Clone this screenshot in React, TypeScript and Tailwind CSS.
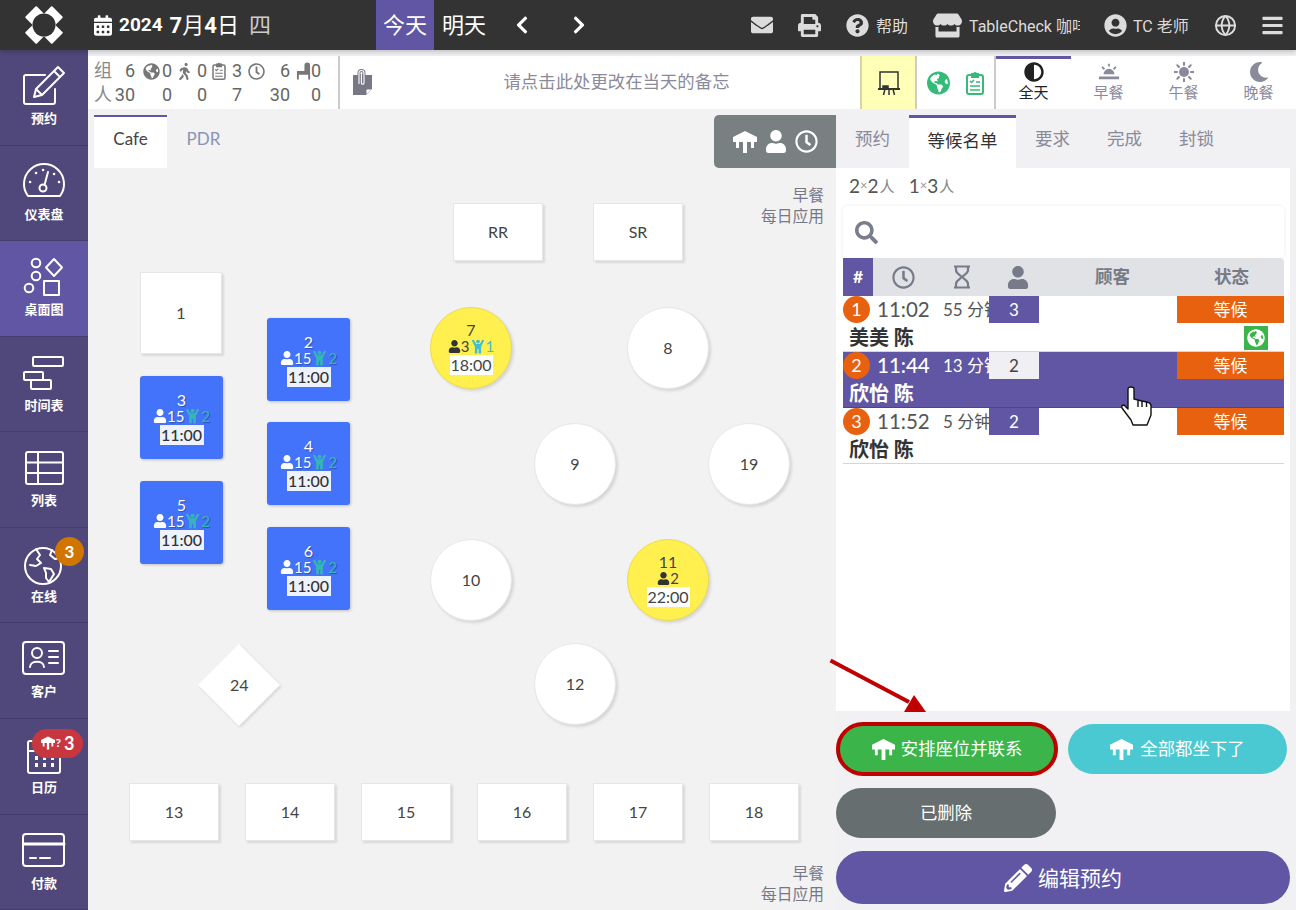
import type { ReactNode } from "react";
import {
  FaAdjust,
  FaBars,
  FaCalendarAlt,
  FaChevronLeft,
  FaChevronRight,
  FaEnvelope,
  FaGlobeAmericas,
  FaMoon,
  FaPencilAlt,
  FaPrint,
  FaQuestionCircle,
  FaRegClock,
  FaSearch,
  FaStore,
  FaUser,
  FaUserCircle,
  FaWalking,
} from "react-icons/fa";
import { FiGlobe } from "react-icons/fi";

const FONT = "font-['Lato','Noto_Sans_CJK_SC',sans-serif]";

function TableIcon({ className }: { className?: string }) {
  return (
    <svg viewBox="0 0 24 24" fill="currentColor" className={className}>
      <path d="M12 1 L24 7 V12 H21 V18 H18 V12 H14 V23 H10 V12 H6 V18 H3 V12 H0 V7 Z" />
    </svg>
  );
}

function ChildIcon({ className }: { className?: string }) {
  return (
    <svg viewBox="0 0 24 24" fill="currentColor" className={className}>
      <circle cx="12" cy="4" r="3" />
      <path d="M2 2 L5 1 L9 8 H15 L19 1 L22 2 L17 12 V23 H13 V16 H11 V23 H7 V12 Z" />
    </svg>
  );
}

function ChairIcon({ className }: { className?: string }) {
  return (
    <svg viewBox="0 0 16 18" fill="currentColor" className={className}>
      <path d="M9 3 a3 3 0 0 1 6 0 V18 H13 V13 H3 V18 H1 V9 H9 Z" />
    </svg>
  );
}

function ClipboardIcon({ className }: { className?: string }) {
  return (
    <svg viewBox="0 0 18 24" fill="none" stroke="currentColor" strokeWidth="2" className={className}>
      <rect x="1" y="4" width="16" height="19" rx="2" />
      <path d="M6 4 V3 H8 a1 1 0 0 1 2 0 H12 V6 H6 Z" fill="currentColor" />
      <path d="M4 10 L5.5 11.5 L8 9 M10 11 H14 M4 15 H14 M4 19 H14" strokeWidth="1.5" />
    </svg>
  );
}

function SideIcon({ children }: { children: ReactNode }) {
  return (
    <svg viewBox="0 0 44 44" fill="none" stroke="white" strokeWidth="2" strokeLinejoin="round" strokeLinecap="round" className="w-[44px] h-[44px]">
      {children}
    </svg>
  );
}

const NAV: { label: string; active?: boolean; icon: ReactNode; badge?: ReactNode }[] = [
  {
    label: "预约",
    icon: (
      <SideIcon>
        <path d="M33 25 V38 a2 2 0 0 1 -2 2 H4 a2 2 0 0 1 -2 -2 V13 a2 2 0 0 1 2 -2 H23" />
        <path d="M36 3 L42 9 L20 31 L12 33 L14 25 Z M32 7 L38 13 M14 25 L20 31" />
      </SideIcon>
    ),
  },
  {
    label: "仪表盘",
    icon: (
      <SideIcon>
        <path d="M6 36 A20 20 0 1 1 38 36 Z" />
        <circle cx="21" cy="28" r="3.5" />
        <path d="M22.5 25 L26 12" />
        <path d="M8 22 h.1 M14 13 h.1 M21 10 h.1 M32 14 h.1 M37 22 h.1" strokeWidth="2.5" />
      </SideIcon>
    ),
  },
  {
    label: "桌面图",
    active: true,
    icon: (
      <SideIcon>
        <circle cx="14" cy="8" r="4.3" />
        <circle cx="14" cy="21" r="4.3" />
        <circle cx="7" cy="33" r="4.3" />
        <path d="M32 4 L40 12.5 L32 21 L24 12.5 Z" />
        <rect x="22" y="26" width="15" height="14" />
      </SideIcon>
    ),
  },
  {
    label: "时间表",
    icon: (
      <SideIcon>
        <rect x="11" y="6" width="30" height="9" rx="1" />
        <rect x="2" y="21" width="19" height="8" rx="1" />
        <rect x="9" y="29" width="20" height="9" rx="1" />
      </SideIcon>
    ),
  },
  {
    label: "列表",
    icon: (
      <SideIcon>
        <rect x="4" y="6" width="37" height="32" rx="2" />
        <path d="M4 16.5 H41 M4 27 H41 M16 6 V38" />
      </SideIcon>
    ),
  },
  {
    label: "在线",
    badge: <span className="absolute left-[55px] top-[9px] w-[29px] h-[29px] rounded-full bg-[#cf7500] text-white text-[17px] font-bold flex items-center justify-center">3</span>,
    icon: (
      <SideIcon>
        <circle cx="21" cy="24" r="18" />
        <path d="M14 7 L18 13 L15 17 L19 21 L14 24 L8 23 M22 26 L29 27 L32 32 L27 40 L24 36 L24 31 Z M30 8 L28 13 L33 17 L38 16" />
      </SideIcon>
    ),
  },
  {
    label: "客户",
    icon: (
      <SideIcon>
        <rect x="1" y="5" width="41" height="32" rx="3" />
        <circle cx="15" cy="16" r="5" />
        <path d="M8 30 c0 -7 14 -7 14 0 M27 14 H36 M27 20 H36 M27 26 H36" />
      </SideIcon>
    ),
  },
  {
    label: "日历",
    badge: (
      <span className="absolute left-[32px] top-[10px] h-[29px] w-[51px] rounded-full bg-[#c8363f] text-white flex items-center justify-center gap-[2px] font-bold">
        <TableIcon className="w-[14px] h-[14px]" />
        <span className="text-[12px] -ml-[1px]">?</span>
        <span className="text-[18px] leading-none ml-[1px]">3</span>
      </span>
    ),
    icon: (
      <SideIcon>
        <rect x="6" y="8" width="32" height="32" rx="2" />
        <path d="M6 18 H38" />
        <path d="M13 25 h3 M21 25 h3 M29 25 h3 M13 32 h3 M21 32 h3 M29 32 h3" strokeWidth="4" strokeLinecap="butt" />
      </SideIcon>
    ),
  },
  {
    label: "付款",
    icon: (
      <SideIcon>
        <rect x="1" y="5" width="41" height="32" rx="3" />
        <path d="M1 15 H42" strokeWidth="3" />
        <path d="M8 29 H14 M18 29 H28" />
      </SideIcon>
    ),
  },
];

type Table = {
  n: string;
  x: number;
  y: number;
  w: number;
  h: number;
  shape?: "round" | "diamond";
  blue?: boolean;
  yellow?: { p: string; c?: string; t: string };
};

const blue = (n: string, x: number, y: number): Table => ({ n, x, y, w: 83, h: 83, blue: true });
const plain = (n: string, x: number, y: number, w = 90, h = 58): Table => ({ n, x, y, w, h });
const round = (n: string, x: number, y: number): Table => ({ n, x, y, w: 82, h: 82, shape: "round" });

const TABLES: Table[] = [
  plain("RR", 365, 94),
  plain("SR", 505, 94),
  plain("1", 52, 163, 82, 82),
  blue("3", 52, 267),
  blue("5", 52, 372),
  blue("2", 179, 209),
  blue("4", 179, 313),
  blue("6", 179, 418),
  { ...round("7", 342, 198), yellow: { p: "3", c: "1", t: "18:00" } },
  round("8", 539, 198),
  round("9", 446, 314),
  round("19", 620, 314),
  round("10", 342, 430),
  { ...round("11", 539, 430), yellow: { p: "2", t: "22:00" } },
  round("12", 446, 534),
  { n: "24", x: 122, y: 547, w: 58, h: 58, shape: "diamond" },
  plain("13", 41, 674),
  plain("14", 157, 674),
  plain("15", 273, 674),
  plain("16", 389, 674),
  plain("17", 505, 674),
  plain("18", 621, 674),
];

function TableNode({ t }: { t: Table }) {
  const pos = { left: t.x, top: t.y, width: t.w, height: t.h };
  if (t.blue) {
    return (
      <div style={pos} className="absolute rounded-[3px] bg-[#4373fb] shadow-[1px_1px_3px_rgba(0,0,0,0.2)] flex flex-col items-center justify-center text-white [text-shadow:1px_1px_1px_rgba(0,0,0,0.3)]">
        <div className="text-[16px] leading-[17px]">{t.n}</div>
        <div className="flex items-center text-[15px] leading-[16px]">
          <FaUser className="w-[14px] h-[14px]" />
          <span>15</span>
          <ChildIcon className="w-[17px] h-[16px] text-[#35b6b5]" />
          <span className="text-[#35b6b5]">2</span>
        </div>
        <div className="mt-[1px] w-[44px] h-[20px] bg-[#eef2fd] text-[#333] text-[16px] font-medium leading-[20px] text-center [text-shadow:none]">11:00</div>
      </div>
    );
  }
  if (t.yellow) {
    return (
      <div style={pos} className="absolute rounded-full bg-[#fff050] border border-[#eadc50] shadow-[2px_2px_3px_rgba(0,0,0,0.12)] flex flex-col items-center justify-center text-[#444]">
        <div className="text-[16px] leading-[17px]">{t.n}</div>
        <div className="flex items-center text-[15px] leading-[17px]">
          <FaUser className="w-[13px] h-[13px] text-[#333]" />
          <span>{t.yellow.p}</span>
          {t.yellow.c && (
            <>
              <ChildIcon className="w-[16px] h-[15px] text-[#44bdd0]" />
              <span className="text-[#44bdd0]">{t.yellow.c}</span>
            </>
          )}
        </div>
        <div className="w-[43px] h-[20px] bg-white text-[16px] leading-[20px] text-center">{t.yellow.t}</div>
      </div>
    );
  }
  if (t.shape === "diamond") {
    return (
      <div style={pos} className="absolute rotate-45 bg-white shadow-[2px_0_3px_rgba(0,0,0,0.12)] flex items-center justify-center">
        <span className="-rotate-45 text-[16px] text-[#444]">{t.n}</span>
      </div>
    );
  }
  return (
    <div style={pos} className={`absolute bg-white flex items-center justify-center text-[16px] text-[#444] ${t.shape === "round" ? "rounded-full border border-[#e8e8e8] shadow-[2px_2px_3px_rgba(0,0,0,0.12)]" : "border border-[#e6e6e6] shadow-[2px_2px_2px_rgba(0,0,0,0.1)]"}`}>
      {t.n}
    </div>
  );
}

const ROWS = [
  { i: "1", time: "11:02", wait: "55 分钟", n: "3", name: "美美 陈", web: true },
  { i: "2", time: "11:44", wait: "13 分钟", n: "2", name: "欣怡 陈", on: true },
  { i: "3", time: "11:52", wait: "5 分钟", n: "2", name: "欣怡 陈" },
];

function Row({ r }: { r: (typeof ROWS)[number] }) {
  return (
    <div className={`relative h-[56px] border-b ${r.on ? "bg-[#6056a3] border-[#4c4490] text-white" : "bg-white border-[#d6d6d6] text-[#333]"}`}>
      <div className="flex h-[27px] items-stretch">
        <span className="w-[27px] h-[27px] rounded-full bg-[#e8610f] text-white text-[18px] flex items-center justify-center shrink-0">{r.i}</span>
        <span className={`ml-[7px] w-[55px] shrink-0 text-[20.5px] leading-[27px] ${r.on ? "font-medium" : "text-[#555]"}`}>{r.time}</span>
        <span className={`ml-[11px] w-[46px] shrink-0 whitespace-nowrap text-[17px] leading-[27px] ${r.on ? "" : "text-[#555]"}`}>{r.wait}</span>
        <span className={`relative w-[50px] shrink-0 text-[17px] flex items-center justify-center ${r.on ? "bg-[#efeff4] text-[#444]" : "bg-[#6056a3] text-white"}`}>{r.n}</span>
        <span className="ml-[138px] w-[107px] bg-[#e8610f] text-white text-[17px] flex items-center justify-center">等候</span>
      </div>
      <div className="pl-[6px] text-[20px] leading-[28px] font-bold">{r.name}</div>
      {r.web && (
        <span className="absolute left-[401px] top-[30px] w-[24px] h-[24px] bg-[#3bb54a] flex items-center justify-center">
          <FaGlobeAmericas className="w-[18px] h-[18px] text-white" />
        </span>
      )}
    </div>
  );
}

function ScopeNote({ className }: { className: string }) {
  return (
    <div className={`absolute right-[12px] text-right text-[15.75px] leading-[21px] text-[#77778a] ${className}`}>
      <div>早餐</div>
      <div>每日应用</div>
    </div>
  );
}

export default function App() {
  return (
    <div className={`relative w-[1296px] h-[910px] overflow-hidden flex flex-col bg-[#f1f1f4] ${FONT}`}>
      {/* top bar */}
      <header className="relative z-10 h-[50px] shrink-0 bg-[#333] flex items-stretch text-white shadow-[0_2px_5px_rgba(0,0,0,0.2)] font-['Roboto','Noto_Sans_CJK_SC',sans-serif]">
        <div className="w-[88px] flex items-center justify-center">
          <svg viewBox="-19 -19 38 38" className="w-[38px] h-[38px]" fill="white">
            <rect x="-8" y="-19" width="16" height="12" rx="1" transform="rotate(45)" />
            <rect x="-8" y="-19" width="16" height="12" rx="1" transform="rotate(135)" />
            <rect x="-8" y="-19" width="16" height="12" rx="1" transform="rotate(225)" />
            <rect x="-8" y="-19" width="16" height="12" rx="1" transform="rotate(315)" />
            <circle r="11.5" fill="#333" />
          </svg>
        </div>
        <div className="ml-[6px] w-[282px] flex items-center">
          <FaCalendarAlt className="w-[18px] h-[21px]" />
          <span className="ml-[7px] text-[19px] font-bold">2024</span>
          <span className="ml-[7px] text-[22px]"><b>7</b>月<b>4</b>日</span>
          <span className="ml-[10px] text-[22px] text-[#ccc]">四</span>
        </div>
        <div className="w-[58px] bg-[#6056a3] flex items-center justify-center text-[22px]">今天</div>
        <div className="w-[60px] flex items-center justify-center text-[22px]">明天</div>
        <div className="ml-[21px] flex items-center gap-[43px]">
          <FaChevronLeft className="w-[14px] h-[20px]" />
          <FaChevronRight className="w-[14px] h-[20px]" />
        </div>
        <div className="ml-auto flex items-center text-[#dcdcdc] text-[16px]">
          <FaEnvelope className="w-[24px] h-[22px]" />
          <FaPrint className="ml-[24px] w-[23px] h-[23px]" />
          <FaQuestionCircle className="ml-[25px] w-[23px] h-[23px]" />
          <span className="ml-[7px] pt-[3px] w-[32px] whitespace-nowrap">帮助</span>
          <FaStore className="ml-[25px] w-[29px] h-[25px]" />
          <span className="ml-[7px] pt-[3px] w-[111px] overflow-hidden whitespace-nowrap">TableCheck 咖啡馆</span>
          <FaUserCircle className="ml-[24px] w-[23px] h-[23px]" />
          <span className="ml-[6px] pt-[3px] w-[56px] whitespace-nowrap">TC 老师</span>
          <FiGlobe className="ml-[25px] w-[23px] h-[23px]" />
          <FaBars className="ml-[24px] mr-[12px] w-[23px] h-[23px]" />
        </div>
      </header>

      <div className="flex-1 flex min-h-0">
        {/* side nav */}
        <nav className="w-[88px] shrink-0 flex flex-col bg-[#50487a] text-white">
          {NAV.map((item) => (
            <div key={item.label} className={`relative flex-1 flex flex-col items-center pt-[14px] border-b border-[#453d6c] ${item.active ? "bg-[#6056a3]" : ""}`}>
              {item.icon}
              <span className="mt-[2px] text-[13px] font-bold leading-[16px]">{item.label}</span>
              {item.badge}
            </div>
          ))}
        </nav>

        <main className="flex-1 flex flex-col min-w-0">
          {/* info strip */}
          <div className="mt-[6px] h-[53px] shrink-0 flex bg-white text-[#666] font-['Roboto','Noto_Sans_CJK_SC',sans-serif]">
            <div className="ml-[6px] w-[244px] pt-[3px] grid grid-cols-[17px_24px_26px_11px_25px_9px_26px_9px_24px_25px_21px_10px] grid-rows-[24px_24px] content-start text-[18px] leading-[24px] items-center text-right">
              <span className="text-left text-[#888]">组</span>
              <span>6</span>
              <FaGlobeAmericas className="ml-auto mr-[1px] w-[17px] h-[17px] text-[#777]" />
              <span>0</span>
              <FaWalking className="mx-auto w-[15px] h-[17px] text-[#777]" />
              <span>0</span>
              <ClipboardIcon className="ml-[6px] w-[14px] h-[18px] text-[#777]" />
              <span>3</span>
              <FaRegClock className="ml-[7px] w-[17px] h-[17px] text-[#777]" />
              <span>6</span>
              <ChairIcon className="ml-[6px] w-[15px] h-[18px] text-[#777]" />
              <span>0</span>
              <span className="text-left text-[#888]">人</span>
              <span>30</span>
              <span />
              <span>0</span>
              <span />
              <span>0</span>
              <span />
              <span>7</span>
              <span />
              <span>30</span>
              <span />
              <span>0</span>
            </div>
            <div className="w-[2px] shrink-0 bg-[#ccc]" />
            <div className="flex-1 flex items-center">
              <svg viewBox="0 0 21 27" className="ml-[12px] w-[21px] h-[27px] text-[#787885]">
                <path d="M1 6 H20 V20 L14 26 H1 Z" fill="currentColor" />
                <path d="M14.5 25 V20.5 H19.5 Z" fill="white" />
                <path d="M7 15 V4 a2.5 2.5 0 0 1 5 0 V14 a1.3 1.3 0 0 1 -2.6 0 V5" fill="none" stroke="currentColor" strokeWidth="3" />
                <path d="M7 15 V4 a2.5 2.5 0 0 1 5 0 V14 a1.3 1.3 0 0 1 -2.6 0 V5" fill="none" stroke="white" strokeWidth="1.1" />
              </svg>
              <span className="flex-1 text-center text-[17.4px] text-[#8a8a9a]">请点击此处更改在当天的备忘</span>
            </div>
            <div className="w-[55px] shrink-0 bg-[#ffffb8] border-l-2 border-[#d6d6a0] flex items-center justify-center">
              <svg viewBox="0 0 24 26" className="w-[24px] h-[26px]" fill="none" stroke="#333" strokeWidth="1.5">
                <path d="M3 18 V2 H21 V18" />
                <path d="M1 19 H23" strokeWidth="2" />
                <path d="M6 16 H11 V19 H6 Z" fill="#333" />
                <path d="M8 19 L6.5 25 M12 19 V25 M16 19 L17.5 25" />
              </svg>
            </div>
            <div className="w-[2px] shrink-0 bg-[#ccc]" />
            <div className="w-[77px] shrink-0 flex items-center justify-center gap-[16px] text-[#35bb78]">
              <FaGlobeAmericas className="w-[23px] h-[24px]" />
              <ClipboardIcon className="w-[18px] h-[24px]" />
            </div>
            <div className="w-[2px] shrink-0 bg-[#ccc]" />
            <div className="w-[300px] shrink-0 grid grid-cols-4 text-[15px] text-[#8a8a9a]">
              <div className="relative flex flex-col items-center pt-[6px] text-[#222]">
                <div className="absolute top-0 inset-x-0 h-[3px] bg-[#6056a3]" />
                <FaAdjust className="w-[20px] h-[20px]" />
                <span className="leading-[18px] mt-[2px]">全天</span>
              </div>
              <div className="flex flex-col items-center pt-[6px]">
                <svg viewBox="0 0 24 20" className="w-[22px] h-[20px]" fill="currentColor">
                  <path d="M6 12.5 A6 6 0 0 1 18 12.5 Z M1 15 H23 V18 H1 Z" />
                  <path d="M12 1 V4 M4.5 4.5 L7 7 M19.5 4.5 L17 7" stroke="currentColor" strokeWidth="2" />
                </svg>
                <span className="leading-[18px] mt-[2px]">早餐</span>
              </div>
              <div className="flex flex-col items-center pt-[6px]">
                <svg viewBox="0 0 20 20" className="w-[20px] h-[20px]" fill="currentColor">
                  <circle cx="10" cy="10" r="5" />
                  <path d="M10 .5 V3 M10 17 V19.5 M.5 10 H3 M17 10 H19.5 M3.3 3.3 L5 5 M15 15 L16.7 16.7 M16.7 3.3 L15 5 M5 15 L3.3 16.7" stroke="currentColor" strokeWidth="2" strokeLinecap="round" />
                </svg>
                <span className="leading-[18px] mt-[2px]">午餐</span>
              </div>
              <div className="flex flex-col items-center pt-[6px]">
                <FaMoon className="w-[20px] h-[20px]" />
                <span className="leading-[18px] mt-[2px]">晚餐</span>
              </div>
            </div>
          </div>

          <div className="flex-1 flex min-h-0">
            {/* floor plan */}
            <section className="relative w-[748px] shrink-0 bg-[#f2f2f2]">
              <div className="ml-[6px] mt-[6px] h-[53px] flex text-[17px]">
                <div className="w-[73px] bg-white border-t-2 border-[#6056a3] flex items-center justify-center pb-[7px] text-[#444]">Cafe</div>
                <div className="w-[73px] flex items-center justify-center pb-[6px] text-[#8a93b5]">PDR</div>
              </div>
              <ScopeNote className="top-[75px]" />
              {TABLES.map((t) => (
                <TableNode key={t.n} t={t} />
              ))}
              <ScopeNote className="bottom-[6px]" />
              <div className="absolute left-[626px] top-[6px] w-[122px] h-[53px] rounded-l-[5px] bg-[#788082] flex items-center justify-center gap-[9px] text-white">
                <TableIcon className="w-[24px] h-[24px]" />
                <FaUser className="w-[20px] h-[23px]" />
                <FaRegClock className="w-[23px] h-[23px]" />
              </div>
            </section>

            {/* waitlist panel */}
            <section className="flex-1 flex flex-col pt-[6px] min-w-0">
              <div className="h-[53px] shrink-0 flex text-[17.5px] text-[#8a8a9a]">
                <div className="w-[73px] flex items-center justify-center pb-[4px]">预约</div>
                <div className="w-[107px] bg-white border-t-[3px] border-[#6056a3] flex items-center justify-center pb-[4px] text-[#333]">等候名单</div>
                <div className="w-[73px] flex items-center justify-center pb-[4px]">要求</div>
                <div className="w-[73px] flex items-center justify-center pb-[4px] -ml-[1px]">完成</div>
                <div className="w-[73px] flex items-center justify-center pb-[4px] -ml-[1px]">封锁</div>
              </div>
              <div className="h-[543px] w-[454px] shrink-0 bg-white px-[7px] flex flex-col pr-[6px]">
                <div className="h-[38px] pl-[6px] pb-[2px] flex items-center text-[19px] text-[#555]">
                  2<span className="text-[13px] text-[#999]">×</span>2<span className="text-[15px] text-[#888] ml-[1px]">人</span>
                  <span className="ml-[14px]">1</span><span className="text-[13px] text-[#999]">×</span>3<span className="text-[15px] text-[#888] ml-[1px]">人</span>
                </div>
                <div className="h-[52px] rounded-[5px] bg-white shadow-[0_0_4px_rgba(0,0,0,0.08)] flex items-center pl-[12px] text-[#7a7d8c]">
                  <FaSearch className="w-[23px] h-[23px]" />
                </div>
                <div className="h-[38px] shrink-0 flex items-center bg-[#e1e2e5] text-[#777a88] text-[17.5px] font-bold rounded-t-[4px]">
                  <span className="w-[30px] h-full bg-[#6056a3] text-white flex items-center justify-center">#</span>
                  <FaRegClock className="ml-[19px] w-[23px] h-[23px]" />
                  <svg viewBox="0 0 18 24" className="ml-[38px] w-[18px] h-[24px]" fill="none" stroke="currentColor" strokeWidth="2.2">
                    <path d="M1 1.5 H17 M1 22.5 H17 M3 2 V5 C3 9 8 10 8.5 12 C8 14 3 15 3 19 V22 M15 2 V5 C15 9 10 10 9.5 12 C10 14 15 15 15 19 V22" />
                  </svg>
                  <FaUser className="ml-[36px] w-[22px] h-[23px]" />
                  <span className="ml-[66px] w-[36px] whitespace-nowrap">顾客</span>
                  <span className="ml-[83px] w-[36px] whitespace-nowrap">状态</span>
                </div>
                {ROWS.map((r) => (
                  <Row key={r.i} r={r} />
                ))}
              </div>
              <div className="h-[199px] relative text-white">
                <div className="absolute left-0 top-[11px] w-[222px] h-[54px] rounded-full bg-[#3bb54a] border-[4px] border-[#c00000] flex items-center justify-center gap-[6px] text-[17.4px]">
                  <TableIcon className="w-[23px] h-[23px]" />安排座位并联系
                </div>
                <div className="absolute left-[232px] top-[13px] w-[219px] h-[50px] rounded-full bg-[#4bc9d3] flex items-center justify-center gap-[7px] text-[17.4px]">
                  <TableIcon className="w-[23px] h-[23px]" />全部都坐下了
                </div>
                <div className="absolute left-0 top-[77px] w-[220px] h-[50px] rounded-full bg-[#676e6f] flex items-center justify-center text-[17.4px]">已删除</div>
                <div className="absolute left-0 top-[140px] w-[454px] h-[53px] rounded-full bg-[#6056a3] flex items-center justify-center gap-[6px] text-[21px]">
                  <FaPencilAlt className="w-[28px] h-[28px]" />编辑预约
                </div>
              </div>
            </section>
          </div>
        </main>
      </div>

      {/* hand cursor over the selected row */}
      <svg viewBox="-1 -1 32 40" className="absolute left-[1120px] top-[386px] w-[32px] h-[40px]" fill="white" stroke="#111" strokeWidth="1.4" strokeLinejoin="round">
        <path d="M7 2 q0 -2 3 -2 t3 2 V12 l4 1 l4 1 l5 1 q4 1 4 4 V28 L26 38 H12 L10 33 L1 21 Q0 18 3 18 L7 22 Z" />
        <path d="M17 13 V20 M21 14 V20 M25.5 15 V20" fill="none" />
      </svg>

      {/* annotation arrow */}
      <svg className="absolute left-[825px] top-[655px] w-[110px] h-[60px]" viewBox="0 0 110 60">
        <path d="M5.5 5.5 L84 47" stroke="#c00000" strokeWidth="4" />
        <path d="M79 57 L101 57 L89 40 Z" fill="#c00000" />
      </svg>
    </div>
  );
}
